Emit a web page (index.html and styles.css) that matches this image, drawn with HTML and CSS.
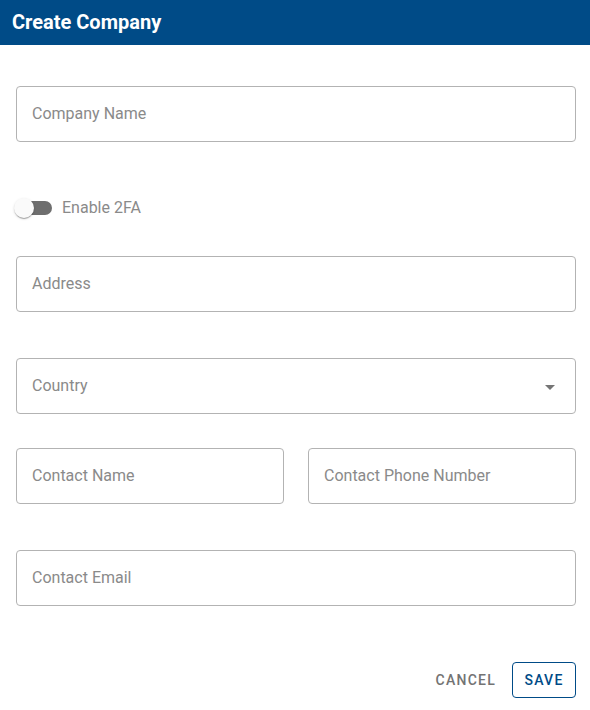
FILE: index.html
```html
<!DOCTYPE html>
<html>
<head>
<meta charset="utf-8">
<link rel="stylesheet" href="styles.css">
</head>
<body>
<div class="header"><h1 class="title">Create Company</h1></div>
<div class="form">
  <div class="field f-company"><span class="ph">Company Name</span></div>
  <div class="toggle-row">
    <span class="toggle"><span class="track"></span><span class="thumb"></span></span>
    <span class="toggle-label">Enable 2FA</span>
  </div>
  <div class="field f-address"><span class="ph">Address</span></div>
  <div class="field f-country select"><span class="ph">Country</span><span class="arrow"></span></div>
  <div class="row f-contact">
    <div class="field half"><span class="ph">Contact Name</span></div>
    <div class="field half"><span class="ph">Contact Phone Number</span></div>
  </div>
  <div class="field f-email"><span class="ph">Contact Email</span></div>
  <div class="actions">
    <button class="btn cancel">Cancel</button>
    <button class="btn save">Save</button>
  </div>
</div>
</body>
</html>
```
FILE: styles.css
```css
html, body { margin: 0; padding: 0; background: #fff; }
body { font-family: Roboto, "Liberation Sans", sans-serif; width: 590px; height: 710px; overflow: hidden; }
.header { height: 45px; background: #004b87; display: flex; align-items: center; padding-left: 12px; }
.title { margin: 0; color: #fff; font-size: 20px; font-weight: 700; letter-spacing: 0; line-height: 1; position: relative; top: -1px; }
.form { display: flex; flex-direction: column; padding: 0 14px 0 16px; }
.field { box-sizing: border-box; height: 56px; border: 1px solid #b3b3b3; border-radius: 4px; display: flex; align-items: center; padding-left: 15px; }
.ph { font-size: 16px; color: #8a8a8a; position: relative; top: -1px; }
.f-company { margin-top: 41px; }
.toggle-row { margin-top: 54px; height: 24px; display: flex; align-items: center; }
.toggle { position: relative; width: 36px; height: 24px; display: inline-block; margin-right: 10px; }
.track { position: absolute; left: 1px; top: 5px; width: 35px; height: 14px; border-radius: 7px; background: #6e6e6e; }
.thumb { position: absolute; left: -2px; top: 2px; width: 20px; height: 20px; border-radius: 50%; background: #fafafa; box-shadow: 0 2px 1px -1px rgba(0,0,0,.2), 0 1px 1px 0 rgba(0,0,0,.14), 0 1px 3px 0 rgba(0,0,0,.12); }
.toggle-label { font-size: 16px; color: #8a8a8a; position: relative; top: -1px; }
.f-address { margin-top: 36px; }
.f-country { margin-top: 46px; justify-content: space-between; padding-right: 20px; }
.arrow { width: 0; height: 0; border-left: 5px solid transparent; border-right: 5px solid transparent; border-top: 5px solid #757575; margin-top: 2px; }
.row { display: flex; gap: 24px; }
.f-contact { margin-top: 34px; }
.half { flex: 1; }
.f-email { margin-top: 46px; }
.actions { margin-top: 56px; display: flex; justify-content: flex-end; align-items: center; gap: 8px; }
.btn { font-family: Roboto, "Liberation Sans", sans-serif; font-size: 14px; font-weight: 500; text-transform: uppercase; letter-spacing: 1.25px; background: transparent; height: 36px; border-radius: 4px; cursor: pointer; }
.cancel { border: none; color: #737373; padding: 0 8px; }
.save { border: 1px solid #004b87; color: #004b87; width: 64px; padding: 0; }
```
